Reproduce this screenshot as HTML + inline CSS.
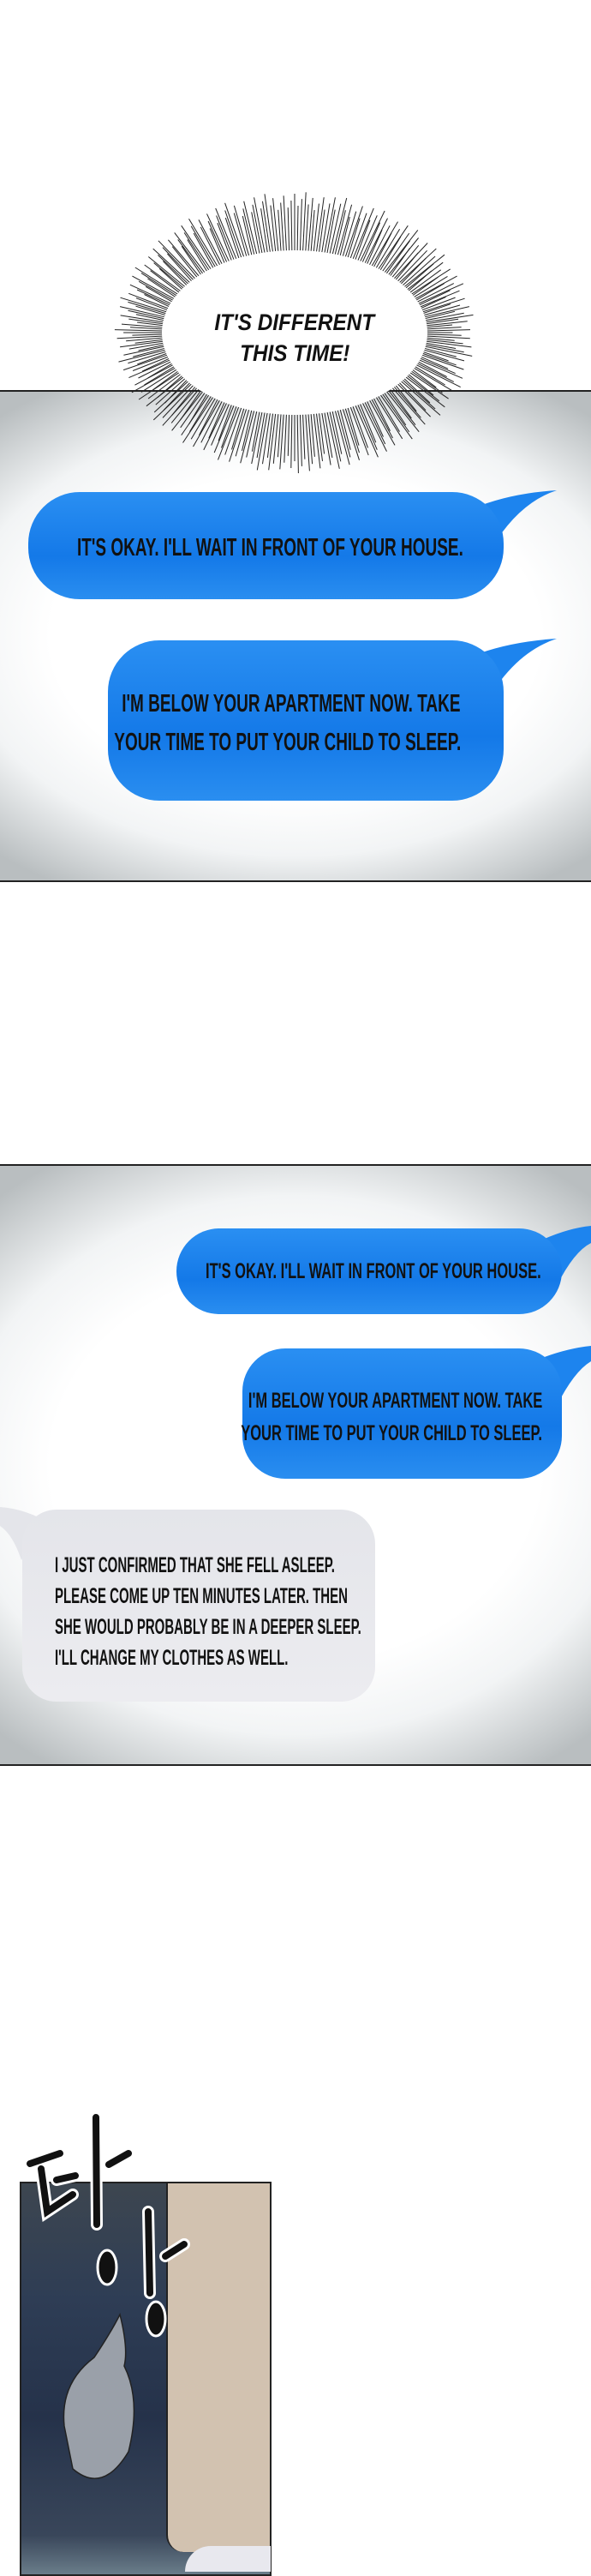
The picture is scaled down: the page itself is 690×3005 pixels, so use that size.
<!DOCTYPE html>
<html><head><meta charset="utf-8"><style>
*{margin:0;padding:0;box-sizing:border-box}
body{width:690px;height:3000px;background:#fff;position:relative;overflow:hidden;font-family:"Liberation Sans",sans-serif}
.abs{position:absolute}
.panel{position:absolute;left:-2px;width:694px;border-top:2px solid #222;border-bottom:2px solid #222;
background:radial-gradient(ellipse 75% 60% at 50% 50%,#fff 55%,#f2f4f5 75%,#b9bec0 100%)}
.bub{position:absolute;border-radius:60px;background:linear-gradient(180deg,#2a8ff2,#1479e8 60%,#2a8ef0)}
.gray{background:linear-gradient(180deg,#e4e5ea,#ececf0)}
.t{position:absolute;font-weight:bold;color:#111;white-space:nowrap;font-size:29px;line-height:29px;transform:scaleX(.655)}
.tl{transform-origin:left center}.tr{transform-origin:right center}
.s2{font-size:25px;transform:scaleX(.66)}
.s3{font-size:25px;transform:scaleX(.6)}
.burst{position:absolute;left:194px;top:358px;font-weight:bold;font-style:italic;font-size:27px;line-height:36px;color:#111;text-align:center;width:300px;white-space:nowrap}
.burst span{display:inline-block;transform:scaleX(.9)}
</style></head><body>

<div class="panel" style="top:455px;height:574px"></div>
<svg class="abs" style="left:0;top:0" width="690" height="1100">
<g stroke="#222" stroke-width="1" id="sp"></g>
<ellipse cx="344" cy="388" rx="155" ry="96" fill="#fff"/>
<path d="M560 590 Q600 575 650 572 Q610 585 580 630 L575 600Z" fill="#1d84ee"/>
<path d="M560 762 Q600 748 650 745 Q610 758 580 800 L575 770Z" fill="#1d84ee"/>
</svg>
<script>
(function(){var g=document.getElementById('sp'),s='';for(var i=0;i<300;i++){var a=i/300*Math.PI*2,c=Math.cos(a),n=Math.sin(a);var r2=0.9+((i*37)%11)/80;s+='<line x1="'+(344+c*150).toFixed(1)+'" y1="'+(388+n*92).toFixed(1)+'" x2="'+(344+c*205*r2).toFixed(1)+'" y2="'+(388+n*160*r2).toFixed(1)+'"/>';}g.innerHTML=s;})();
</script>
<div class="burst"><span>IT'S DIFFERENT</span><br><span>THIS TIME!</span></div>

<div class="bub" style="left:33px;top:574px;width:555px;height:125px"></div>
<div class="t tl" style="left:90px;top:625px">IT'S OKAY. I'LL WAIT IN FRONT OF YOUR HOUSE.</div>
<div class="bub" style="left:126px;top:747px;width:462px;height:187px"></div>
<div class="t tr" style="right:152px;top:807px">I'M BELOW YOUR APARTMENT NOW. TAKE</div>
<div class="t tr" style="right:152px;top:852px">YOUR TIME TO PUT YOUR CHILD TO SLEEP.</div>

<div class="panel" style="top:1358px;height:702px"></div>
<svg class="abs" style="left:0;top:1400px" width="690" height="450">
<path d="M625 50 Q660 33 690 30 L690 50 Q670 60 650 100 L640 60Z" fill="#1d84ee"/>
<path d="M625 187 Q660 173 690 170 L690 188 Q670 200 650 240 L640 200Z" fill="#1d84ee"/>
<path d="M60 378 Q30 360 0 358 L0 380 Q15 390 25 420 L40 390Z" fill="#e4e5ea"/>
</svg>
<div class="bub" style="left:206px;top:1433px;width:450px;height:100px;border-radius:50px"></div>
<div class="t tl s2" style="left:240px;top:1469px">IT'S OKAY. I'LL WAIT IN FRONT OF YOUR HOUSE.</div>
<div class="bub" style="left:283px;top:1573px;width:373px;height:152px;border-radius:50px"></div>
<div class="t tr s2" style="right:57px;top:1620px">I'M BELOW YOUR APARTMENT NOW. TAKE</div>
<div class="t tr s2" style="right:57px;top:1658px">YOUR TIME TO PUT YOUR CHILD TO SLEEP.</div>
<div class="bub gray" style="left:26px;top:1761px;width:412px;height:224px;border-radius:40px"></div>
<div class="t tl s3" style="left:64px;top:1812px">I JUST CONFIRMED THAT SHE FELL ASLEEP.</div>
<div class="t tl s3" style="left:64px;top:1848px">PLEASE COME UP TEN MINUTES LATER. THEN</div>
<div class="t tl s3" style="left:64px;top:1884px">SHE WOULD PROBABLY BE IN A DEEPER SLEEP.</div>
<div class="t tl s3" style="left:64px;top:1920px">I'LL CHANGE MY CLOTHES AS WELL.</div>

<div class="abs" style="left:23px;top:2545px;width:294px;height:460px;border:2px solid #222;background:linear-gradient(180deg,#3d4650,#2e3d55 30%,#25324a 60%,#39465a 90%,#6a7d8a)"></div>
<div class="abs" style="left:194px;top:2547px;width:121px;height:430px;background:#d2c2b0;border-left:2px solid #222;border-radius:0 0 0 20px"></div>
<div class="abs" style="left:216px;top:2970px;width:100px;height:30px;background:#e8e8ee;border-radius:30px 0 0 0"></div>
<svg class="abs" style="left:0;top:2400px" width="330" height="600">
<path d="M75 430 Q70 380 110 350 Q130 320 140 300 Q150 340 145 360 Q165 400 150 460 Q120 510 85 480 Z" fill="#9aa0a9" stroke="#222" stroke-width="1.5"/>
<g stroke="#fff" stroke-width="14" stroke-linecap="round" fill="none">
<path d="M35 124 L70 112"/><path d="M48 130 L55 180 L85 160"/><path d="M66 143 L88 138"/><path d="M112 70 L113 195"/><path d="M127 125 L150 112"/>
<path d="M173 180 L175 275"/><path d="M193 232 L215 218"/></g>
<g stroke="#111" stroke-width="8" stroke-linecap="round" fill="none">
<path d="M35 124 L70 112"/><path d="M48 130 L55 180 L85 160"/><path d="M66 143 L88 138"/><path d="M112 70 L113 195"/><path d="M127 125 L150 112"/>
<path d="M173 180 L175 275"/><path d="M193 232 L215 218"/></g>
<ellipse cx="125" cy="245" rx="11" ry="20" fill="#111" stroke="#fff" stroke-width="3"/>
<ellipse cx="182" cy="305" rx="11" ry="20" fill="#111" stroke="#fff" stroke-width="3"/>
</svg>
</body></html>
